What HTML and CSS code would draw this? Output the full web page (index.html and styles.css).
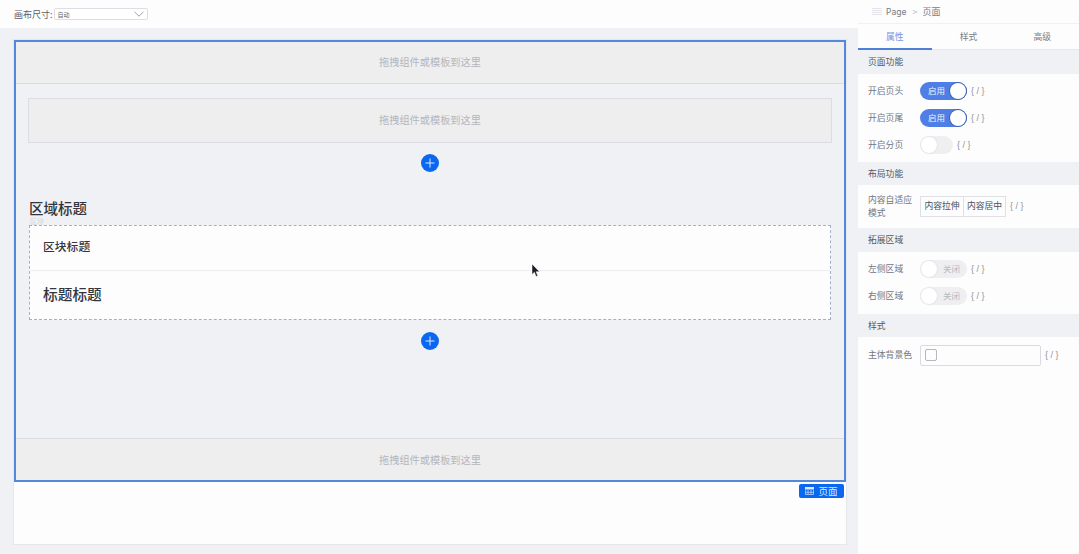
FILE: index.html
```html
<!DOCTYPE html>
<html lang="zh">
<head>
<meta charset="utf-8">
<title>页面</title>
<link rel="stylesheet" href="styles.css">
</head>
<body>
<div class="app">
  <main class="main">
    <div class="toolbar">
      <span class="toolbar-label">画布尺寸:</span>
      <div class="select"><span>自动</span>
        <svg class="chev" width="10" height="6" viewBox="0 0 10 6"><path d="M.5.8 5 5.2 9.5.8" fill="none" stroke="#9aa0aa" stroke-width="1"/></svg>
      </div>
    </div>
    <div class="stage">
      <div class="page">
        <div class="frame">
          <div class="drop drop-head">拖拽组件或模板到这里</div>
          <div class="content">
            <div class="drop drop-inner">拖拽组件或模板到这里</div>
            <div class="add-row"><button class="add"><svg width="10" height="10" viewBox="0 0 10 10"><path d="M5 .5v9M.5 5h9" stroke="#dbe8ff" stroke-width="1"/></svg></button></div>
            <h2 class="region-title">区域标题</h2>
            <div class="block">
              <span class="block-tag">区块</span>
              <div class="block-row block-row-a">区块标题</div>
              <div class="block-row block-row-b">标题标题</div>
            </div>
            <div class="add-row add-row-b"><button class="add"><svg width="10" height="10" viewBox="0 0 10 10"><path d="M5 .5v9M.5 5h9" stroke="#dbe8ff" stroke-width="1"/></svg></button></div>
          </div>
          <div class="drop drop-foot">拖拽组件或模板到这里</div>
          <div class="page-tag">
            <svg width="9" height="8" viewBox="0 0 9 8"><path d="M0 0h9v2.500H0z" fill="#dbe8ff"/><path d="M.4 3v4.600h8.200V3M3 3v5M6 3v5M0 5.300h9" stroke="#bcd3fb" stroke-width=".8" fill="none"/></svg>
            <span>页面</span>
          </div>
        </div>
      </div>
      <svg class="cursor" width="10" height="14" viewBox="0 0 10 14"><path d="M1 0v10.500l2.400-2.200 1.700 4.200 1.700-.7-1.700-4.100H8.500z" fill="#1c1f24" stroke="#fff" stroke-width=".5"/></svg>
    </div>
  </main>
  <aside class="panel">
    <div class="crumb">
      <svg width="10" height="7" viewBox="0 0 10 7"><path d="M0 .5h10M0 2.500h10M0 4.500h10M0 6.500h10" stroke="#e2e4e8" stroke-width="1"/></svg>
      <span class="crumb-page">Page</span>
      <span class="crumb-sep">&gt;</span>
      <span>页面</span>
    </div>
    <div class="tabs">
      <div class="tab tab-active">属性</div>
      <div class="tab">样式</div>
      <div class="tab">高级</div>
    </div>
    <div class="sec-head">页面功能</div>
    <div class="sec-body sec-body-a">
      <div class="row"><span class="lbl">开启页头</span><span class="sw sw-on"><i>启用</i><b></b></span><span class="var">{ / }</span></div>
      <div class="row"><span class="lbl">开启页尾</span><span class="sw sw-on"><i>启用</i><b></b></span><span class="var">{ / }</span></div>
      <div class="row"><span class="lbl">开启分页</span><span class="sw sw-off sw-short"><b></b></span><span class="var">{ / }</span></div>
    </div>
    <div class="sec-head">布局功能</div>
    <div class="sec-body sec-body-b">
      <div class="row row-tall"><span class="lbl lbl-wrap">内容自适应模式</span>
        <span class="seg"><span>内容拉伸</span><span>内容居中</span></span><span class="var">{ / }</span></div>
    </div>
    <div class="sec-head">拓展区域</div>
    <div class="sec-body sec-body-c">
      <div class="row"><span class="lbl">左侧区域</span><span class="sw sw-off"><b></b><i>关闭</i></span><span class="var">{ / }</span></div>
      <div class="row"><span class="lbl">右侧区域</span><span class="sw sw-off"><b></b><i>关闭</i></span><span class="var">{ / }</span></div>
    </div>
    <div class="sec-head">样式</div>
    <div class="sec-body sec-body-d">
      <div class="row"><span class="lbl">主体背景色</span><span class="color"><span class="swatch"></span></span><span class="var">{ / }</span></div>
    </div>
  </aside>
</div>
</body>
</html>
```
FILE: styles.css
```css
* { box-sizing: border-box; }
html, body { margin: 0; height: 100%; }
body {
  font-family: "Noto Sans CJK SC", "Liberation Sans", sans-serif;
  background: #f0f1f4;
  color: #555a63;
  overflow: hidden;
}
.app { display: flex; width: 1079px; height: 554px; }
.main { width: 858px; display: flex; flex-direction: column; }
.toolbar {
  height: 28px; background: #fdfdfe; display: flex; align-items: center;
  padding-left: 14px; gap: 1px; font-size: 9px; color: #5a5f68;
}
.select {
  width: 94px; height: 12px; border: 1px solid #dcdee3; border-radius: 2px; background: #fff;
  display: flex; align-items: center; justify-content: space-between;
  padding: 0 3px; font-size: 6px; color: #666;
}
.stage { flex: 1; padding: 12px 12px 10px 14px; position: relative; }
.page { height: 504px; width: 832px; background: #fdfdfe; box-shadow: 0 0 0 1px #e6e7ea; }
.frame {
  height: 442px; border: 2px solid #5488dc; background: #f0f1f4;
  display: flex; flex-direction: column; position: relative;
}
.drop {
  display: flex; align-items: center; justify-content: center;
  background: #eeeeef; color: #b3b6bc; font-size: 10.200px;
}
.drop-head { height: 42px; border-bottom: 1px solid #d9dbe0; flex: none; padding-bottom: 2px; }
.drop-foot { height: 42px; border-top: 1px solid #d9dbe0; flex: none; }
.content { flex: 1; padding: 14px 12px 0 12px; }
.drop-inner { height: 45px; border: 1px solid #dcdde2; padding-bottom: 2px; }
.add-row { display: flex; justify-content: center; padding-top: 11px; }
.add-row-b { padding-top: 12px; }
.add {
  width: 18px; height: 18px; border-radius: 50%; border: 0; padding: 0; background: #0a68f0;
  display: flex; align-items: center; justify-content: center;
}
.region-title {
  margin: 28px 1px 0; font-size: 14.500px; line-height: 15px; font-weight: 500; color: #33363c;
  height: 25px;
}
.block {
  margin: 0 1px; height: 95px; border: 1px dashed #9fb0c8; background: #fdfdfe; position: relative;
  display: flex; flex-direction: column;
}
.block-tag { position: absolute; left: 0; top: -8px; font-size: 7px; line-height: 7px; color: #d3d6dc; }
.block-row { padding: 0 0 4px 13px; display: flex; align-items: center; color: #33363c; }
.block-row-a { height: 45px; font-size: 11.800px; font-weight: 500; border-bottom: 1px solid #eceef1; padding-bottom: 6px; }
.block-row-b { flex: 1; font-size: 14.700px; font-weight: 500; }
.page-tag {
  position: absolute; right: 0; top: 442px; width: 45px; height: 14px;
  background: #0a68f0; border-radius: 2px; color: #dbe8ff; font-size: 9.500px;
  display: flex; align-items: center; justify-content: center; gap: 4px;
}
.cursor { position: absolute; left: 531px; top: 236px; }
.panel { width: 221px; background: #fdfdfe; display: flex; flex-direction: column; font-size: 8.800px; }
.crumb {
  height: 24px; display: flex; align-items: center; padding-left: 14px;
  border-bottom: 1px solid #f0f1f4; font-size: 9px; color: #777c85;
}
.crumb-page { font-family: "Inter", "Liberation Sans", sans-serif; font-size: 8.500px; margin-left: 4px; }
.crumb-sep { color: #b8bbc2; margin: 0 5px 0 6px; }
.tabs { height: 26px; display: flex; }
.tab {
  flex: 1; display: flex; align-items: center; justify-content: center;
  border-bottom: 1px solid #e7e8ec; color: #777b84;
}
.tab-active { color: #6d97e6; border-bottom: 1px solid #4f7fd8; box-shadow: inset 0 -1px 0 #4f7fd8; }
.sec-head {
  height: 23.500px; background: #f0f1f4; display: flex; align-items: center; padding-left: 10px; color: #54585f;
}
.sec-body { padding-left: 10px; display: flex; flex-direction: column; }
.sec-body-a { height: 88px; padding-top: 4px; }
.sec-body-b { height: 43px; padding-top: 5px; }
.sec-body-c { height: 62px; padding-top: 4px; }
.sec-body-d { padding-top: 4.500px; }
.row { display: flex; align-items: center; height: 27px; flex: none; }
.row-tall { height: 32px; }
.lbl { width: 52px; color: #73777f; flex: none; padding-bottom: 1px; }
.lbl-wrap { line-height: 13px; padding: 0 6px 0 0; }
.sw {
  width: 47px; height: 18px; border-radius: 9px; display: flex; align-items: center; flex: none;
  position: relative; font-size: 8.500px;
}
.sw i { font-style: normal; padding-bottom: 2px; }
.sw b { width: 16px; height: 16px; border-radius: 50%; background: #fff; flex: none; }
.sw-on { background: #4f7fe6; color: #f0f4ff; justify-content: space-between; padding: 0 1px 0 8px; }
.sw-on b { box-shadow: 0 0 0 1px #3f62ab; }
.sw-off { background: #efeff1; color: #b6b9c0; gap: 6px; padding-left: 1px; }
.sw-off b { box-shadow: 0 0 2px #d0d2d8; }
.sw-short { width: 33px; }
.var { margin: 0 0 1px 4px; color: #8f939b; font-size: 9px; white-space: pre; font-family: "Liberation Sans", sans-serif; }
.seg { display: flex; height: 21px; border: 1px solid #dfe1e6; flex: none; color: #4c5058; }
.seg span { width: 42px; display: flex; align-items: center; justify-content: center; padding-bottom: 1px; }
.seg span + span { border-left: 1px solid #dfe1e6; }
.color {
  width: 121px; height: 21px; border: 1px solid #d9dbe0; border-radius: 2px; display: flex; align-items: center;
  padding-left: 4px; flex: none;
}
.swatch { width: 12px; height: 12px; border: 1px solid #b4b7be; border-radius: 2px; }
```
